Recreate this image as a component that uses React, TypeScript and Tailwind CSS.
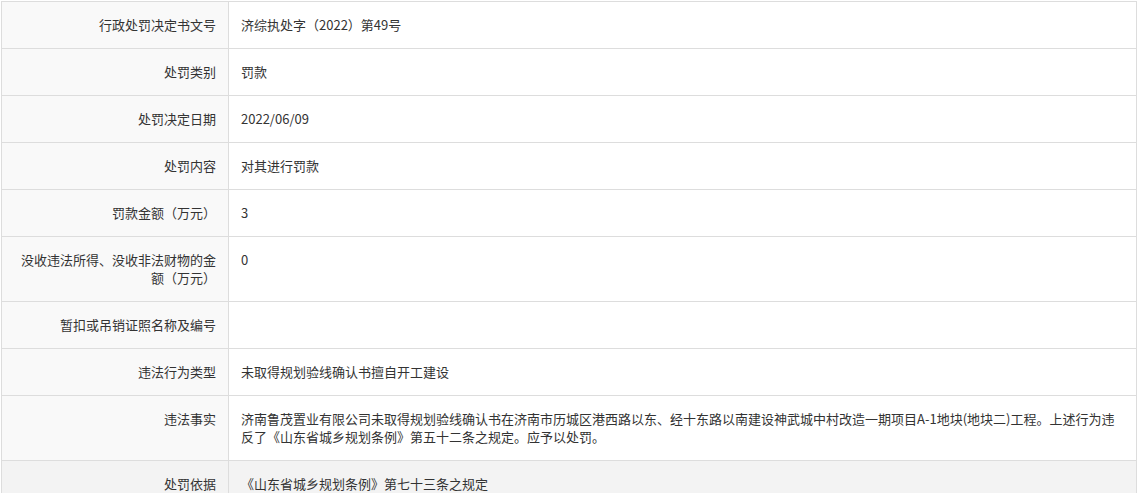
import React from 'react'

const rows: { label: React.ReactNode; value: React.ReactNode; hover?: boolean }[] = [
  { label: '行政处罚决定书文号', value: '济综执处字（2022）第49号' },
  { label: '处罚类别', value: '罚款' },
  { label: '处罚决定日期', value: '2022/06/09' },
  { label: '处罚内容', value: '对其进行罚款' },
  { label: '罚款金额（万元）', value: '3' },
  { label: '没收违法所得、没收非法财物的金额（万元）', value: '0' },
  { label: '暂扣或吊销证照名称及编号', value: '' },
  { label: '违法行为类型', value: '未取得规划验线确认书擅自开工建设' },
  {
    label: '违法事实',
    value:
      '济南鲁茂置业有限公司未取得规划验线确认书在济南市历城区港西路以东、经十东路以南建设神武城中村改造一期项目A-1地块(地块二)工程。上述行为违反了《山东省城乡规划条例》第五十二条之规定。应予以处罚。',
  },
  { label: '处罚依据', value: '《山东省城乡规划条例》第七十三条之规定', hover: true },
]

export default function App() {
  return (
    <div className="h-[493px] w-[1139px] overflow-hidden bg-white font-['Microsoft_YaHei','Noto_Sans_CJK_SC',sans-serif] text-[13px] leading-[18px] text-[#333]">
      <div className="ml-px mt-px w-[1136px] border-l border-r border-t border-[#ddd]">
        {rows.map((r, i) => (
          <div key={i} className={`flex border-b border-[#ddd] ${r.hover ? 'bg-[#f3f3f3]' : ''}`}>
            {/* 左侧标签 */}
            <div
              className={`w-[227px] shrink-0 border-r border-[#ddd] py-[14px] pl-3 pr-3 text-right ${
                r.hover ? 'bg-[#f3f3f3]' : 'bg-[#f9f9f9]'
              }`}
            >
              {r.label}
            </div>
            {/* 右侧内容 */}
            <div className="min-w-0 flex-1 py-[14px] pl-3 pr-3">{r.value}</div>
          </div>
        ))}
      </div>
    </div>
  )
}
